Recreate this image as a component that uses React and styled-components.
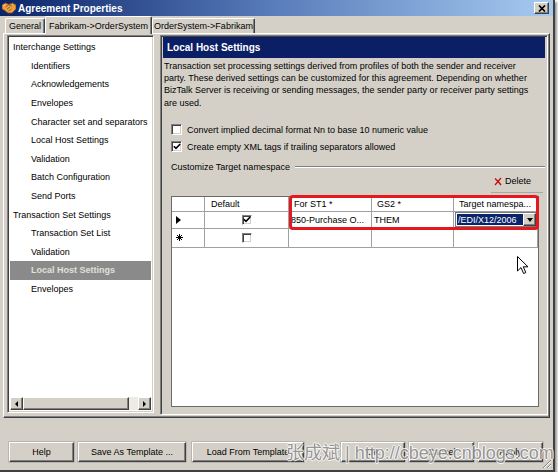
import React from 'react';
import styled, { createGlobalStyle, css } from 'styled-components';

const GlobalStyle = createGlobalStyle`
  html, body {
    margin: 0;
    padding: 0;
    background: #fff;
  }
  body {
    font-family: "Liberation Sans", Arial, sans-serif;
    font-size: 9px;
    color: #000;
  }
  * {
    box-sizing: border-box;
  }
`;

const raised = css`
  border: 1px solid;
  border-color: #fff #404040 #404040 #fff;
  box-shadow: inset -1px -1px #808080;
`;

const sunken = css`
  border: 1px solid;
  border-color: #808080 #fff #fff #808080;
  box-shadow: inset 1px 1px #404040, inset -1px -1px #d4d0c8;
`;

const Window = styled.div`
  position: relative;
  width: 555px;
  height: 472px;
  background: #d4d0c8;
  border-right: 2px solid #404040;
  border-bottom: 2px solid #404040;
  box-shadow: 2px 2px 2px rgba(0, 0, 0, 0.4);
  display: flex;
  flex-direction: column;
`;

const TitleBar = styled.div`
  height: 16px;
  display: flex;
  align-items: center;
  padding: 0 4px 0 2px;
  background: linear-gradient(to right, #0a246a 0%, #5a7dbb 50%, #a6caf0 100%);
`;

const TitleText = styled.span`
  flex: 1;
  margin-left: 2px;
  color: #fff;
  font-weight: bold;
  font-size: 10px;
`;

const CloseButton = styled.div`
  width: 15px;
  height: 12px;
  background: #d4d0c8;
  ${raised};
  display: flex;
  align-items: center;
  justify-content: center;
`;

const TabStrip = styled.div`
  height: 17px;
  display: flex;
  align-items: flex-end;
  padding-left: 5px;
`;

const Tab = styled.div`
  position: relative;
  z-index: ${p => (p.$active ? 2 : 1)};
  width: ${p => p.$w}px;
  height: ${p => (p.$active ? 18 : 15)}px;
  margin-bottom: ${p => (p.$active ? -1 : 0)}px;
  background: #d4d0c8;
  border: 1px solid;
  border-color: #fff #404040 transparent #fff;
  border-bottom: none;
  border-radius: 2px 2px 0 0;
  box-shadow: inset -1px 0 #808080;
  display: flex;
  align-items: center;
  justify-content: center;
  white-space: nowrap;
  font-size: 9px;
`;

const TabPage = styled.div`
  margin-left: 3px;
  width: 547px;
  height: 385px;
  ${raised};
  padding: 1px 0 0 3px;
`;

const Split = styled.div`
  display: flex;
  gap: 6px;
`;

const Tree = styled.div`
  width: 147px;
  height: 378px;
  background: #fff;
  ${sunken};
  padding: 2px;
  display: flex;
  flex-direction: column;
`;

const TreeList = styled.div`
  flex: 1;
`;

const TreeItem = styled.div`
  height: 18.6px;
  display: flex;
  align-items: center;
  padding-left: ${p => 3 + p.$level * 18}px;
  white-space: nowrap;
  background: ${p => (p.$selected ? '#8a8a8a' : 'transparent')};
  color: ${p => (p.$selected ? '#e2e0da' : '#000')};
  font-weight: ${p => (p.$selected ? 'bold' : 'normal')};
`;

const HScroll = styled.div`
  height: 13px;
  display: flex;
  background: #ecebe6;
`;

const ScrollButton = styled.div`
  width: 13px;
  height: 13px;
  background: #d4d0c8;
  ${raised};
  display: flex;
  align-items: center;
  justify-content: center;
`;

const ScrollThumb = styled.div`
  width: 106px;
  height: 13px;
  background: #d4d0c8;
  ${raised};
`;

const ScrollTrack = styled.div`
  flex: 1;
`;

const Arrow = styled.span`
  width: 0;
  height: 0;
  border-top: 3px solid transparent;
  border-bottom: 3px solid transparent;
  ${p =>
    p.$dir === 'left'
      ? css`border-right: 3px solid #000;`
      : css`border-left: 3px solid #000;`}
`;

const Panel = styled.div`
  width: 388px;
  height: 380px;
  ${sunken};
  padding: 1px;
  display: flex;
  flex-direction: column;
`;

const PanelHeader = styled.div`
  height: 21px;
  margin: 0 1px;
  background: #0a1f66;
  color: #fff;
  font-weight: bold;
  font-size: 10px;
  display: flex;
  align-items: center;
  padding-left: 4px;
`;

const Description = styled.div`
  margin: 2px 0 0 2px;
  line-height: 12.2px;
  white-space: nowrap;
`;

const CheckRow = styled.div`
  height: 17px;
  margin-left: 9px;
  display: flex;
  align-items: center;
  gap: 5px;
  margin-top: ${p => p.$mt || 0}px;
`;

const CheckBox = styled.span`
  width: ${p => p.$size || 11}px;
  height: ${p => p.$size || 11}px;
  background: #fff;
  ${sunken};
  display: inline-flex;
  align-items: center;
  justify-content: center;
`;

const GroupRow = styled.div`
  height: 14px;
  margin: 4.5px 1px 0 9px;
  display: flex;
  align-items: center;
`;

const GroupLine = styled.div`
  flex: 1;
  margin-left: 5px;
  border-top: 1px solid #808080;
  border-bottom: 1px solid #fff;
`;

const ToolBar = styled.div`
  height: 19px;
  display: flex;
  justify-content: flex-end;
  padding-right: 3px;
`;

const ToolButton = styled.div`
  width: 52px;
  height: 19px;
  border-bottom: 1px solid #a8a8a8;
  display: flex;
  align-items: flex-start;
  gap: 3px;
  padding: 2px 0 0 3px;
  line-height: 11px;
`;

const Grid = styled.div`
  position: relative;
  margin: 3px 0 0 9px;
  width: 368px;
  height: 211px;
  background: #fff;
  border: 1px solid #6a6a6a;
`;

const GridRow = styled.div`
  display: grid;
  grid-template-columns: 33px 84px 83px 82px 84px;
  height: ${p => p.$h}px;
`;

const Cell = styled.div`
  border-right: 1px solid #a0a0a0;
  border-bottom: 1px solid #a0a0a0;
  display: flex;
  align-items: center;
  justify-content: ${p => (p.$center ? 'center' : 'flex-start')};
  padding-left: ${p => (p.$center ? 0 : p.$pl ?? 4)}px;
  overflow: hidden;
  white-space: nowrap;
`;

const ComboBox = styled.div`
  width: 100%;
  height: 15px;
  display: flex;
  border: 1px solid #7a7a7a;
  background: #fff;
`;

const ComboText = styled.div`
  flex: 1;
  margin: 1px 0 1px 1px;
  background: #0a246a;
  color: #fff;
  padding-left: 1px;
  overflow: hidden;
  white-space: nowrap;
  display: flex;
  align-items: center;
`;

const ComboButton = styled.div`
  width: 13px;
  background: #d4d0c8;
  ${raised};
  display: flex;
  align-items: center;
  justify-content: center;
`;

const DownArrow = styled.span`
  width: 0;
  height: 0;
  border-left: 3.5px solid transparent;
  border-right: 3.5px solid transparent;
  border-top: 4px solid #000;
`;

const Highlight = styled.div`
  position: absolute;
  left: 117px;
  top: -2px;
  width: 250px;
  height: 35px;
  border: 3px solid #e3191d;
  border-radius: 4px;
  pointer-events: none;
`;

const Cursor = styled.svg`
  position: absolute;
  left: 345px;
  top: 59px;
`;

const Footer = styled.div`
  margin-top: 24px;
  display: flex;
  padding-left: 9px;
  gap: 4px;
`;

const Button = styled.div`
  width: ${p => p.$w}px;
  height: 20px;
  margin-left: ${p => p.$ml || 0}px;
  background: #d4d0c8;
  border: 1px solid;
  border-color: #fff #404040 #404040 #fff;
  box-shadow: inset -1px -1px #808080, 0 0 0 0.5px #9a9a9a;
  display: flex;
  align-items: center;
  justify-content: center;
  white-space: nowrap;
`;

const Watermark = styled.div`
  position: absolute;
  left: 286px;
  top: 443px;
  font-family: "Liberation Sans", "Noto Sans CJK SC", sans-serif;
  font-size: 18px;
  line-height: 20px;
  color: #8c8c8c;
  opacity: 0.85;
  white-space: nowrap;
  text-shadow: 1px 0 #fff, -1px 0 #fff, 0 1px #fff, 0 -1px #fff;
  pointer-events: none;
`;

const Grip = styled.svg`
  position: absolute;
  right: 1px;
  bottom: 1px;
`;

const treeItems = [
  ['Interchange Settings', 0],
  ['Identifiers', 1],
  ['Acknowledgements', 1],
  ['Envelopes', 1],
  ['Character set and separators', 1],
  ['Local Host Settings', 1],
  ['Validation', 1],
  ['Batch Configuration', 1],
  ['Send Ports', 1],
  ['Transaction Set Settings', 0],
  ['Transaction Set List', 1],
  ['Validation', 1],
  ['Local Host Settings', 1, true],
  ['Envelopes', 1],
];

const Check = () => (
  <svg width="8" height="7" viewBox="0 0 8 7">
    <path d="M0.8 3.2 L3 5.4 L7.2 1" stroke="#000" strokeWidth="1.6" fill="none" />
  </svg>
);

const HandshakeIcon = () => (
  <svg width="14" height="12" viewBox="0 0 14 12">
    <path d="M0 3 L3.5 1 L7 2.5 L10.5 1 L14 3 L14 7 L10 11 L6 11 L2 8 L0 7 Z" fill="#eaa044" stroke="#8a4a10" strokeWidth="0.8" />
    <path d="M3.5 5 L7 2.5 L10 4.5 M5 7 L8 5 M6.5 9 L9.5 7" stroke="#8a4a10" strokeWidth="0.8" fill="none" />
    <path d="M1 4 L3 2.5" stroke="#ffe08a" strokeWidth="0.8" />
  </svg>
);

const App = () => {
  return (
    <>
      <GlobalStyle />
      <Window>
        <TitleBar>
          <HandshakeIcon />
          <TitleText>Agreement Properties</TitleText>
          <CloseButton>
            <svg width="8" height="7" viewBox="0 0 8 7">
              <path d="M1 0.5 L7 6.5 M7 0.5 L1 6.5" stroke="#000" strokeWidth="1.7" />
            </svg>
          </CloseButton>
        </TitleBar>

        <TabStrip>
          <Tab $w={40}>General</Tab>
          <Tab $w={107} $active>Fabrikam-&gt;OrderSystem</Tab>
          <Tab $w={103}>OrderSystem-&gt;Fabrikam</Tab>
        </TabStrip>

        <TabPage>
          <Split>
            <Tree>
              <TreeList>
                {treeItems.map(([label, level, selected], i) => (
                  <TreeItem key={i} $level={level} $selected={selected}>
                    {label}
                  </TreeItem>
                ))}
              </TreeList>
              <HScroll>
                <ScrollButton><Arrow $dir="left" /></ScrollButton>
                <ScrollThumb />
                <ScrollTrack />
                <ScrollButton><Arrow $dir="right" /></ScrollButton>
              </HScroll>
            </Tree>

            <Panel>
              <PanelHeader>Local Host Settings</PanelHeader>
              <Description>
                Transaction set processing settings derived from profiles of both the sender and receiver<br />
                party. These derived settings can be customized for this agreement. Depending on whether<br />
                BizTalk Server is receiving or sending messages, the sender party or receiver party settings<br />
                are used.
              </Description>

              <CheckRow $mt={12.5}>
                <CheckBox />
                Convert implied decimal format Nn to base 10 numeric value
              </CheckRow>
              <CheckRow>
                <CheckBox><Check /></CheckBox>
                Create empty XML tags if trailing separators allowed
              </CheckRow>

              <GroupRow>
                Customize Target namespace
                <GroupLine />
              </GroupRow>

              <ToolBar>
                <ToolButton>
                  <svg width="8" height="9" viewBox="0 0 8 9" style={{ marginTop: 1 }}>
                    <path d="M1 1.5 Q4 4 7 8" stroke="#c01010" strokeWidth="1.5" fill="none" />
                    <path d="M7 1 L1 8" stroke="#c01010" strokeWidth="1.2" fill="none" />
                  </svg>
                  Delete
                </ToolButton>
              </ToolBar>

              <Grid>
                <GridRow $h={15}>
                  <Cell />
                  <Cell $pl={6}>Default</Cell>
                  <Cell $pl={5}>For ST1 *</Cell>
                  <Cell $pl={5}>GS2 *</Cell>
                  <Cell $pl={5}>Target namespa...</Cell>
                </GridRow>
                <GridRow $h={17}>
                  <Cell $pl={4}>
                    <svg width="5" height="8" viewBox="0 0 5 8">
                      <path d="M0 0 L5 4 L0 8 Z" fill="#000" />
                    </svg>
                  </Cell>
                  <Cell $center><CheckBox $size={10}><Check /></CheckBox></Cell>
                  <Cell $pl={2}>850-Purchase O...</Cell>
                  <Cell $pl={2}>THEM</Cell>
                  <Cell $pl={1}>
                    <ComboBox>
                      <ComboText>/EDI/X12/2006</ComboText>
                      <ComboButton><DownArrow /></ComboButton>
                    </ComboBox>
                  </Cell>
                </GridRow>
                <GridRow $h={19}>
                  <Cell $pl={4}>
                    <svg width="7" height="7" viewBox="0 0 7 7">
                      <path d="M3.5 0 V7 M0 3.5 H7 M1 1 L6 6 M6 1 L1 6" stroke="#000" strokeWidth="1" />
                    </svg>
                  </Cell>
                  <Cell $center><CheckBox $size={10} /></Cell>
                  <Cell />
                  <Cell />
                  <Cell />
                </GridRow>

                <Highlight />
                <Cursor width="12" height="19" viewBox="0 0 12 19">
                  <path d="M0.5 0.5 L0.5 15 L4 11.6 L6.6 17.5 L8.8 16.6 L6.3 10.8 L11 10.8 Z" fill="#fff" stroke="#000" strokeWidth="1" />
                </Cursor>
              </Grid>
            </Panel>
          </Split>
        </TabPage>

        <Footer>
          <Button $w={65}>Help</Button>
          <Button $w={108}>Save As Template ...</Button>
          <Button $w={112} $ml={2}>Load From Template</Button>
          <Button $w={64} $ml={33}>OK</Button>
          <Button $w={65}>Cancel</Button>
          <Button $w={65}>Apply</Button>
        </Footer>

        <Watermark>张成斌 | http://cbeye.cnblogs.com</Watermark>

        <Grip width="11" height="11" viewBox="0 0 11 11">
          <path d="M10 2 L2 10 M10 6 L6 10 M10 9.5 L9.5 10" stroke="#808080" strokeWidth="1" />
          <path d="M10 3 L3 10 M10 7 L7 10" stroke="#fff" strokeWidth="1" />
        </Grip>
      </Window>
    </>
  );
};

export default App;
